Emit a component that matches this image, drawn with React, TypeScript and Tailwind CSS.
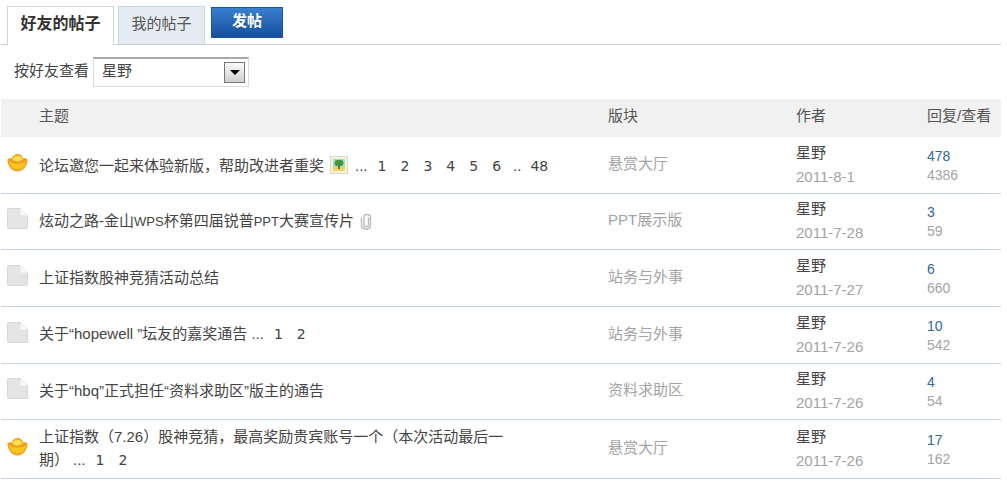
import type { ReactNode } from "react";

type Thread = {
  icon: string;
  title: ReactNode;
  pic?: boolean;
  clip?: boolean;
  pages?: string[];
  last?: string;
  forum: string;
  date: string;
  replies: string;
  views: string;
  h: string;
};

const threads: Thread[] = [
  { icon: "gold", title: "论坛邀您一起来体验新版，帮助改进者重奖", pic: true, pages: ["1", "2", "3", "4", "5", "6"], last: "48", forum: "悬赏大厅", date: "2011-8-1", replies: "478", views: "4386", h: "h-[57px]" },
  {
    icon: "doc",
    title: (
      <>
        炫动之路-金山<span className="text-[13px]">WPS</span>杯第四届锐普<span className="text-[13px]">PPT</span>大赛宣传片
      </>
    ),
    clip: true,
    forum: "PPT展示版",
    date: "2011-7-28",
    replies: "3",
    views: "59",
    h: "h-[56px]",
  },
  { icon: "doc", title: "上证指数股神竞猜活动总结", forum: "站务与外事", date: "2011-7-27", replies: "6", views: "660", h: "h-[57px]" },
  { icon: "doc", title: "关于“hopewell ”坛友的嘉奖通告", pages: ["1", "2"], forum: "站务与外事", date: "2011-7-26", replies: "10", views: "542", h: "h-[57px]" },
  { icon: "doc", title: "关于“hbq”正式担任“资料求助区”版主的通告", forum: "资料求助区", date: "2011-7-26", replies: "4", views: "54", h: "h-[56px]" },
  {
    icon: "gold",
    title: (
      <>
        上证指数（7.26）股神竞猜，最高奖励贵宾账号一个（本次活动最后一
        <br />
        期）
      </>
    ),
    pages: ["1", "2"],
    forum: "悬赏大厅",
    date: "2011-7-26",
    replies: "17",
    views: "162",
    h: "h-[59px]",
  },
];

function GoldIcon() {
  return (
    <svg width="21" height="20" viewBox="0 0 21 20" className="mb-[6px] shrink-0">
      <path d="M0.5 8 C1 6 3 6 5 6.5 C6 0.5 15 0.5 16 6.5 C18 6 20 6 20.5 8 C20.5 14 16 19.5 10.5 19.5 C5 19.5 0.5 14 0.5 8Z" fill="#f0a020" />
      <path d="M5.5 7.5 C6.5 2.5 14.5 2.5 15.5 7.5 C14 10 7 10 5.5 7.5Z" fill="#ffe04a" />
      <path d="M2 9 C5 12.5 16 12.5 19 9 C18.5 14 15 17.5 10.5 17.5 C6 17.5 2.5 14 2 9Z" fill="#fcc51f" />
    </svg>
  );
}

function DocIcon() {
  return (
    <svg width="21" height="21" viewBox="0 0 21 21" className="mb-[6px] shrink-0">
      <path d="M0.5 1.5 Q0.5 0.5 1.5 0.5 H13.5 L20.5 7.5 V19.5 Q20.5 20.5 19.5 20.5 H1.5 Q0.5 20.5 0.5 19.5 Z" fill="#e4e4e4" stroke="#d8d8d8" />
      <path d="M13.5 0.5 V7.5 H20.5 Z" fill="#f8f8f8" />
    </svg>
  );
}

function PicIcon() {
  return (
    <svg width="18" height="18" viewBox="0 0 18 18" className="ml-[6px] mr-[3px] inline-block shrink-0 align-[-3px]">
      <rect x="0.5" y="0.5" width="17" height="17" fill="#f4f2d8" stroke="#d8d8c4" />
      <rect x="3" y="3" width="12" height="12" fill="#a8dcc8" />
      <rect x="3" y="11" width="12" height="4" fill="#e8d468" />
      <ellipse cx="9" cy="7" rx="4.5" ry="3.2" fill="#3f9a3a" />
      <rect x="8" y="9" width="2" height="4" fill="#8c6a2b" />
    </svg>
  );
}

function ClipIcon() {
  return (
    <svg width="12" height="17" viewBox="0 0 12 17" fill="none" stroke="#bcbcbc" strokeWidth="1.4" className="ml-[6px] inline-block shrink-0 align-[-4px]">
      <path d="M8.5 4.5 V12 Q8.5 13.8 6.2 13.8 Q4 13.8 4 12 V3.6 Q4 1.5 6.5 1.5 Q10.5 1.5 10.5 4 V12.5 Q10.5 16 6.2 16 Q1.5 16 1.5 12.5 V4.5" />
    </svg>
  );
}

function Pages({ pages, last }: { pages: string[]; last?: string }) {
  return (
    <span className="text-[#444]">
      <span className="ml-[4px] mr-[3px]">...</span>
      {pages.map((p) => (
        <span key={p} className="mx-[7px] inline-block font-['DejaVu_Sans'] text-[14px]">{p}</span>
      ))}
      {last && (
        <>
          <span className="ml-[5px] mr-[1px]">..</span>
          <span className="ml-[8px] inline-block font-['DejaVu_Sans'] text-[14px]">{last}</span>
        </>
      )}
    </span>
  );
}

export default function App() {
  return (
    <div className="h-[486px] w-[1007px] overflow-hidden bg-white font-['Liberation_Sans','Noto_Sans_CJK_SC',sans-serif] text-[15px] text-[#444]">
      <div className="ml-[1px] flex h-[45px] w-[1000px] items-end gap-[4px] border-b border-[#cdcdcd] pl-[6px]">
        <div className="relative top-px flex h-[39px] w-[107px] items-center justify-center border border-b-0 border-[#cdd5dc] bg-white pb-[4px] text-[16px] font-bold text-[#333]">
          好友的帖子
        </div>
        <div className="flex h-[38px] w-[87px] items-center justify-center border border-b-0 border-[#cdd5dc] bg-[#e5ebf2] pb-[2px] text-[#555]">
          我的帖子
        </div>
        <div className="mb-[6px] ml-[2px] flex h-[31px] w-[72px] items-start justify-center border border-[#1d5499] bg-gradient-to-b from-[#3a7fd0] to-[#144f9c] pt-[2px] font-bold text-white">
          发帖
        </div>
      </div>

      <div className="ml-[14px] mt-[12px] flex h-[30px] items-center gap-[4px]">
        <span className="pb-[2px]">按好友查看</span>
        <div className="flex h-[30px] w-[156px] items-center justify-between border border-[#dcdcdc] border-t-2 border-t-[#a8a8a8] pl-[8px] pr-[3px]">
          <span className="pb-[2px]">星野</span>
          <span className="flex h-[21px] w-[21px] items-center justify-center border border-[#777] bg-gradient-to-b from-[#fafafa] to-[#cfcfcf]">
            <span className="h-0 w-0 border-x-[5px] border-t-[5px] border-x-transparent border-t-black" />
          </span>
        </div>
      </div>

      <div className="ml-[1px] mt-[12px] w-[1000px]">
        <div className="flex h-[38px] items-center bg-[#f1f1f1] pb-[3px] text-[#555]">
          <div className="w-[607px] pl-[38px]">主题</div>
          <div className="w-[188px]">版块</div>
          <div className="w-[131px]">作者</div>
          <div>回复/查看</div>
        </div>
        {threads.map((t, i) => (
          <div key={i} className={`flex items-center border-b border-[#c9d5de] ${t.h}`}>
            <div className="flex w-[38px] justify-start pl-[6px]">
              {t.icon === "gold" ? <GoldIcon /> : <DocIcon />}
            </div>
            <div className={t.pic ? "w-[569px] pt-[2px] leading-[23px]" : "w-[569px] pb-[2px] leading-[23px]"}>
              {t.title}
              {t.pic && <PicIcon />}
              {t.clip && <ClipIcon />}
              {t.pages && <Pages pages={t.pages} last={t.last} />}
            </div>
            <div className="w-[188px] pb-[2px] text-[#a3a3a3]">{t.forum}</div>
            <div className="w-[131px] pb-[2px]">
              <div className="leading-[20px] text-[#444]">星野</div>
              <div className="mt-[5px] leading-[18px] text-[#a3a3a3]">{t.date}</div>
            </div>
            <div className="text-[14px]">
              <div className="leading-[18px] text-[#336699]">{t.replies}</div>
              <div className="mt-[2px] leading-[17px] text-[#a3a3a3]">{t.views}</div>
            </div>
          </div>
        ))}
      </div>
    </div>
  );
}
